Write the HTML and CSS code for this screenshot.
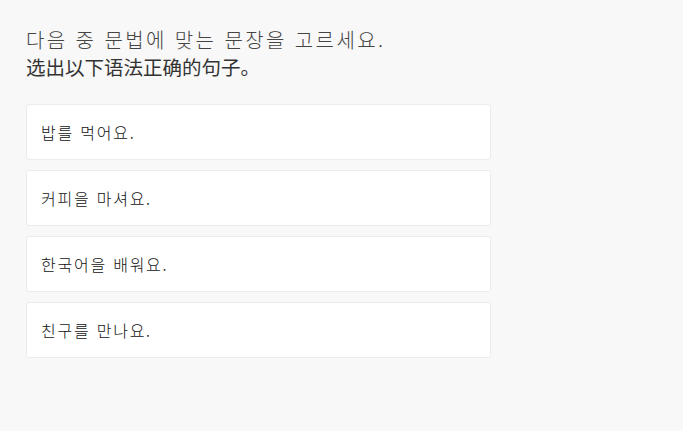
FILE: index.html
```html
<!DOCTYPE html>
<html lang="ko">
<head>
    <meta charset="UTF-8">
    <meta name="viewport" content="width=device-width, initial-scale=1.0">
    <title>문법 퀴즈</title>
    <link rel="stylesheet" href="styles.css">
</head>
<body>
    <div class="quiz">
        <h1 class="question">
            <span class="question-ko">다음 중 문법에 맞는 문장을 고르세요.</span>
            <span class="question-zh">选出以下语法正确的句子。</span>
        </h1>

        <ul class="options">
            <li class="option">밥를 먹어요.</li>
            <li class="option">커피을 마셔요.</li>
            <li class="option">한국어을 배워요.</li>
            <li class="option">친구를 만나요.</li>
        </ul>
    </div>
</body>
</html>
```

FILE: styles.css
```css
body {
    font-family: 'Noto Sans CJK KR', 'Noto Sans CJK SC', sans-serif;
    background: #f8f8f8;
    color: #222;
    margin: 0;
    padding: 0;
}
.quiz {
    width: 465px;
    padding: 26px 26px;
}
.question {
    margin: 0 0 24px;
    font-size: 20px;
    font-weight: normal;
    line-height: 27px;
    color: #444;
}
.question-ko, .question-zh {
    display: block;
}
.question-ko {
    letter-spacing: 0.12em;
    font-weight: 300;
}
.question-zh {
    font-family: 'Noto Sans CJK SC', sans-serif;
    font-size: 19.5px;
    font-weight: 400;
    color: #333;
}
.options {
    list-style: none;
    margin: 0;
    padding: 0;
    display: flex;
    flex-direction: column;
    gap: 10px;
}
.option {
    background: #fff;
    border: 1px solid #ececec;
    border-radius: 3px;
    height: 54px;
    padding: 0 14px;
    display: flex;
    align-items: center;
    font-size: 16px;
    font-weight: 300;
    letter-spacing: 0.11em;
    color: #111;
}
```
